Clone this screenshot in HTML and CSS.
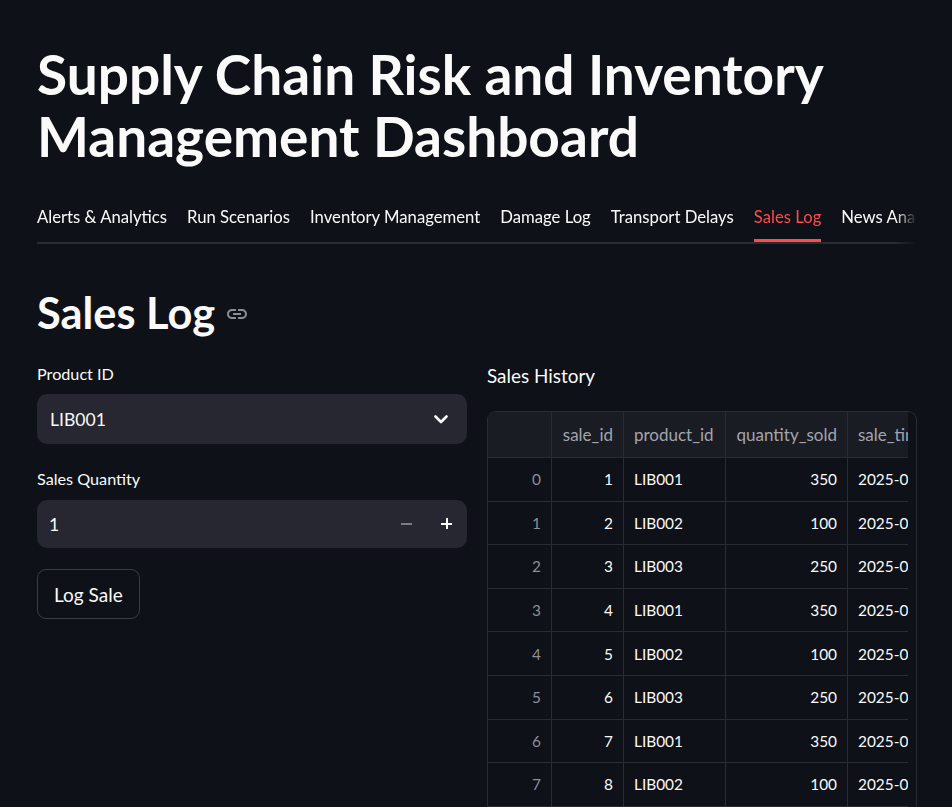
FILE: index.html
```html
<!DOCTYPE html>
<html lang="en">
<head>
<meta charset="utf-8">
<title>Supply Chain Risk and Inventory Management Dashboard</title>
<link rel="stylesheet" href="styles.css">
</head>
<body>
<div class="app">
  <main class="main">
    <h1 class="title">Supply Chain Risk and Inventory Management Dashboard</h1>

    <nav class="tabs">
      <div class="tab">Alerts &amp; Analytics</div>
      <div class="tab">Run Scenarios</div>
      <div class="tab">Inventory Management</div>
      <div class="tab">Damage Log</div>
      <div class="tab">Transport Delays</div>
      <div class="tab active">Sales Log</div>
      <div class="tab">News Analysis</div>
    </nav>

    <h2 class="section-title">Sales Log
      <svg class="link-icon" viewBox="0 0 24 24" width="24" height="24" aria-hidden="true"><path d="M3.9 12c0-1.71 1.39-3.1 3.1-3.1h4V7H7c-2.76 0-5 2.240-5 5s2.24 5 5 5h4v-1.9H7c-1.71 0-3.1-1.39-3.1-3.1zM8 13h8v-2H8v2zm9-6h-4v1.9h4c1.71 0 3.1 1.39 3.1 3.1s-1.39 3.1-3.1 3.1h-4V17h4c2.760 0 5-2.24 5-5s-2.24-5-5-5z"/></svg>
    </h2>

    <div class="columns">
      <section class="col">
        <label class="label">Product ID</label>
        <div class="select">
          <span>LIB001</span>
          <svg class="chev" viewBox="0 0 14 9" width="14" height="9" aria-hidden="true"><polyline points="1.5,1.5 7,7 12.5,1.5"/></svg>
        </div>

        <label class="label label-gap">Sales Quantity</label>
        <div class="number">
          <span class="num-val">1</span>
          <span class="step minus"></span>
          <span class="step plus"></span>
        </div>

        <button class="btn">Log Sale</button>
      </section>

      <section class="col">
        <div class="sub">Sales History</div>
        <div class="df">
          <div class="df-clip">
            <table class="grid">
              <colgroup>
                <col class="c-idx"><col class="c-id"><col class="c-prod"><col class="c-qty"><col class="c-time">
              </colgroup>
              <thead>
                <tr><th></th><th class="r">sale_id</th><th>product_id</th><th class="r">quantity_sold</th><th>sale_time</th></tr>
              </thead>
              <tbody>
                <tr><td class="idx">0</td><td class="r">1</td><td>LIB001</td><td class="r">350</td><td>2025-02-10 14:30:00</td></tr>
                <tr><td class="idx">1</td><td class="r">2</td><td>LIB002</td><td class="r">100</td><td>2025-02-11 09:15:00</td></tr>
                <tr><td class="idx">2</td><td class="r">3</td><td>LIB003</td><td class="r">250</td><td>2025-02-12 11:45:00</td></tr>
                <tr><td class="idx">3</td><td class="r">4</td><td>LIB001</td><td class="r">350</td><td>2025-02-13 16:20:00</td></tr>
                <tr><td class="idx">4</td><td class="r">5</td><td>LIB002</td><td class="r">100</td><td>2025-02-14 10:05:00</td></tr>
                <tr><td class="idx">5</td><td class="r">6</td><td>LIB003</td><td class="r">250</td><td>2025-02-15 13:40:00</td></tr>
                <tr><td class="idx">6</td><td class="r">7</td><td>LIB001</td><td class="r">350</td><td>2025-02-16 08:55:00</td></tr>
                <tr><td class="idx">7</td><td class="r">8</td><td>LIB002</td><td class="r">100</td><td>2025-02-17 15:10:00</td></tr>
                <tr><td class="idx">8</td><td class="r">9</td><td>LIB003</td><td class="r">250</td><td>2025-02-18 12:25:00</td></tr>
                <tr><td class="idx">9</td><td class="r">10</td><td>LIB001</td><td class="r">350</td><td>2025-02-19 17:35:00</td></tr>
              </tbody>
            </table>
          </div>
        </div>
      </section>
    </div>
  </main>
</div>
</body>
</html>
```

FILE: styles.css
```css
* { box-sizing: border-box; }

html, body {
  margin: 0;
  padding: 0;
  background: #0e1117;
  color: #fafafa;
  font-family: Lato, "Noto Sans", sans-serif;
}

.app {
  height: 100vh;
  overflow: hidden;
}

.main {
  width: 880px;
  margin-left: 37px;
  padding-top: 43px;
}

.title {
  margin: 0;
  font-size: 55px;
  font-weight: 700;
  line-height: 62px;
  letter-spacing: 0;
}

.tabs {
  display: flex;
  gap: 20px;
  margin-top: 38px;
  border-bottom: 2px solid #2a2c33;
  overflow: hidden;
  white-space: nowrap;
  -webkit-mask-image: linear-gradient(to right, #000 858px, transparent 880px);
  mask-image: linear-gradient(to right, #000 858px, transparent 880px);
}

.tab {
  position: relative;
  flex: none;
  font-size: 16.7px;
  line-height: 24px;
  padding-bottom: 13px;
  color: #fafafa;
}

.tab.active {
  color: #ff4b4b;
}

.tab.active::after {
  content: "";
  position: absolute;
  left: 0;
  right: 0;
  bottom: 0;
  height: 3px;
  background: #ff4b4b;
}

.section-title {
  display: flex;
  align-items: center;
  gap: 10px;
  margin: 42px 0 0;
  font-size: 43.4px;
  font-weight: 700;
  line-height: 52px;
}

.link-icon {
  fill: #8b8d95;
  margin-top: 4px;
}

.columns {
  display: grid;
  grid-template-columns: 430px 430px;
  column-gap: 20px;
  margin-top: 25px;
}

.col {
  display: flex;
  flex-direction: column;
  align-items: flex-start;
}

.label {
  font-size: 16.2px;
  line-height: 22px;
  color: #fafafa;
}

.label-gap {
  margin-top: 24px;
}

.select {
  margin-top: 9px;
  width: 100%;
  height: 50px;
  background: #262730;
  border-radius: 10px;
  display: flex;
  align-items: center;
  justify-content: space-between;
  padding: 0 19px 0 13px;
  font-size: 17.6px;
}

.chev {
  fill: none;
  stroke: #fafafa;
  stroke-width: 2.6;
  stroke-linecap: round;
  stroke-linejoin: round;
}

.number {
  margin-top: 10px;
  width: 100%;
  height: 48px;
  background: #262730;
  border-radius: 10px;
  display: flex;
  align-items: center;
  padding: 0 0 0 12px;
  font-size: 17.6px;
}

.num-val {
  flex: 1;
}

.step {
  position: relative;
  width: 40px;
  height: 48px;
  display: block;
}

.step::before,
.step::after {
  content: "";
  position: absolute;
  left: 14px;
  top: 23px;
  width: 11px;
  height: 2px;
  background: #fafafa;
}

.minus::before {
  background: #7a7c85;
}

.minus::after {
  display: none;
}

.plus::after {
  left: 19px;
  top: 18px;
  width: 2px;
  height: 11px;
}

.btn {
  margin-top: 21px;
  height: 50px;
  padding: 0 16px;
  background: #0e1117;
  color: #fafafa;
  border: 1px solid #3b3d44;
  border-radius: 9px;
  font-family: inherit;
  font-size: 19px;
}

.sub {
  font-size: 18.9px;
  line-height: 26px;
}

.df {
  margin-top: 22px;
  width: 430px;
  border: 1px solid #2a2c33;
  border-bottom: none;
  border-radius: 9px 9px 0 0;
  overflow: hidden;
  display: flex;
}

.df-clip {
  width: 420px;
  overflow: hidden;
  flex: none;
}

.grid {
  table-layout: fixed;
  border-collapse: separate;
  border-spacing: 0;
  width: 520px;
  font-size: 15.4px;
}

.c-idx { width: 64px; }
.c-id { width: 72px; }
.c-prod { width: 102px; }
.c-qty { width: 122px; }
.c-time { width: 160px; }

.grid th,
.grid td {
  border-right: 1px solid #2a2c33;
  border-bottom: 1px solid #2a2c33;
  padding: 0 10px;
  white-space: nowrap;
  overflow: hidden;
  text-align: left;
}

.grid th {
  height: 46px;
  background: #1a1c23;
  color: #a2a5ad;
  font-weight: 400;
  font-size: 17px;
}

.grid td {
  height: 43.6px;
  color: #fafafa;
}

.grid .r {
  text-align: right;
}

.grid td.idx {
  text-align: right;
  color: #8c8f97;
}
```
